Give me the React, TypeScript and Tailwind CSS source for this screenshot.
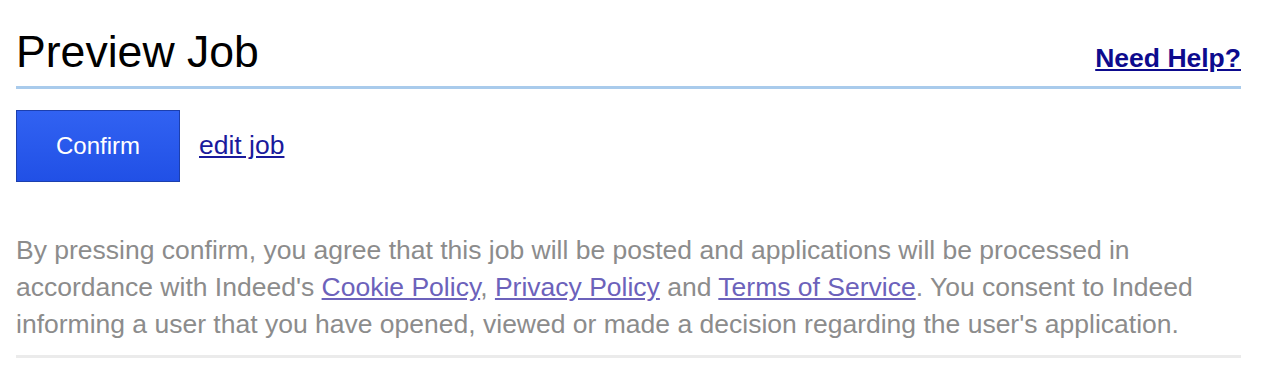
import React from 'react';

export default function App() {
  return (
    <div className="min-h-[382px] bg-white pl-[16px] pr-[25px] font-['Liberation_Sans',Arial,sans-serif]">
      <div className="flex items-baseline justify-between border-b-[3px] border-[#a9cbec] pt-[29px] pb-[12px]">
        <h1 className="text-[44.6px] leading-[45px] text-black">Preview Job</h1>
        <a href="#" className="text-[26.5px] font-bold leading-[26px] text-[#0d0b8e] underline">
          Need Help?
        </a>
      </div>

      <div className="mt-[21px] flex items-center gap-[19px]">
        <button className="h-[72px] w-[164px] border border-[#1c3fae] bg-gradient-to-b from-[#3162f2] to-[#2150e6] text-[24px] text-white">
          Confirm
        </button>
        <a href="#" className="text-[26.5px] text-[#1a1a9c] underline">
          edit job
        </a>
      </div>

      <p className="mt-[50px] text-[26.5px] leading-[37px] text-[#8c8c8c]">
        By pressing confirm, you agree that this job will be posted and applications will be processed in
        <br />
        accordance with Indeed's{' '}
        <a href="#" className="text-[#6c62bb] underline">Cookie Policy</a>,{' '}
        <a href="#" className="text-[#6c62bb] underline">Privacy Policy</a> and{' '}
        <a href="#" className="text-[#6c62bb] underline">Terms of Service</a>. You consent to Indeed
        <br />
        informing a user that you have opened, viewed or made a decision regarding the user's application.
      </p>

      <div className="mt-[12px] border-b-[3px] border-[#ebebeb]" />
    </div>
  );
}
